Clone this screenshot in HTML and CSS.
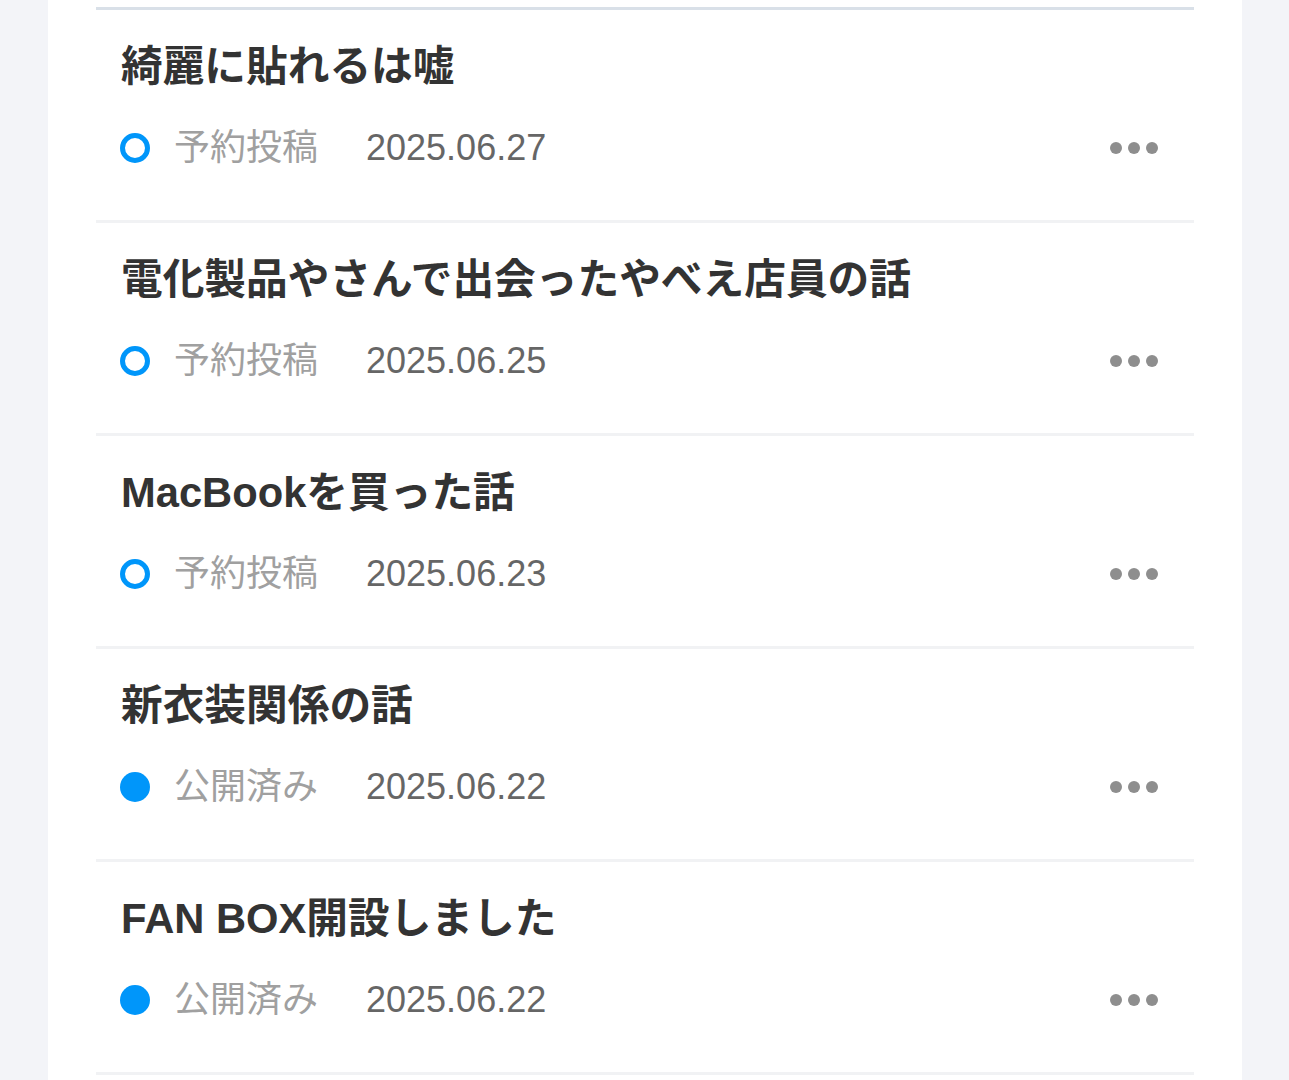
FILE: index.html
```html
<!DOCTYPE html>
<html lang="ja">
<head>
<meta charset="utf-8">
<link rel="stylesheet" href="styles.css">
</head>
<body>
<div class="page">
  <div class="card">
    <ul class="list">
      <li class="row">
        <div class="title">綺麗に貼れるは嘘</div>
        <div class="meta">
          <span class="status-icon ring"></span>
          <span class="status">予約投稿</span>
          <span class="date">2025.06.27</span>
          <span class="more"><i></i><i></i><i></i></span>
        </div>
      </li>
      <li class="row">
        <div class="title">電化製品やさんで出会ったやべえ店員の話</div>
        <div class="meta">
          <span class="status-icon ring"></span>
          <span class="status">予約投稿</span>
          <span class="date">2025.06.25</span>
          <span class="more"><i></i><i></i><i></i></span>
        </div>
      </li>
      <li class="row">
        <div class="title">MacBookを買った話</div>
        <div class="meta">
          <span class="status-icon ring"></span>
          <span class="status">予約投稿</span>
          <span class="date">2025.06.23</span>
          <span class="more"><i></i><i></i><i></i></span>
        </div>
      </li>
      <li class="row">
        <div class="title">新衣装関係の話</div>
        <div class="meta">
          <span class="status-icon dot"></span>
          <span class="status">公開済み</span>
          <span class="date">2025.06.22</span>
          <span class="more"><i></i><i></i><i></i></span>
        </div>
      </li>
      <li class="row">
        <div class="title">FAN BOX開設しました</div>
        <div class="meta">
          <span class="status-icon dot"></span>
          <span class="status">公開済み</span>
          <span class="date">2025.06.22</span>
          <span class="more"><i></i><i></i><i></i></span>
        </div>
      </li>
    </ul>
  </div>
</div>
</body>
</html>
```

FILE: styles.css
```css
html, body {
  margin: 0;
  padding: 0;
  background: #f3f4f8;
}
body {
  font-family: "Liberation Sans", "Noto Sans CJK JP", sans-serif;
  height: 1080px;
  overflow: hidden;
}
.page {
  padding: 0 47px 0 48px;
}
.card {
  background: #ffffff;
  padding: 7px 48px 0 48px;
  min-height: 1080px;
}
.list {
  list-style: none;
  margin: 0;
  padding: 0;
  border-top: 3px solid #d9e0e8;
}
.row {
  padding: 27px 36px 47px 24px;
  border-bottom: 3px solid #f1f2f4;
}
.title {
  font-size: 41.7px;
  line-height: 60px;
  font-weight: 700;
  color: #333333;
  white-space: nowrap;
  margin-left: 1px;
}
.meta {
  margin-top: 26px;
  height: 50px;
  display: flex;
  align-items: center;
}
.status-icon {
  width: 30px;
  height: 30px;
  border-radius: 50%;
  box-sizing: border-box;
  flex: none;
  margin-right: 24px;
}
.ring {
  border: 5px solid #0096fa;
}
.dot {
  background: #0096fa;
}
.status {
  font-size: 36px;
  color: #a0a0a0;
  margin-right: 48px;
  line-height: 50px;
}
.date {
  font-size: 36px;
  color: #666666;
  line-height: 50px;
}
.more {
  margin-left: auto;
  display: flex;
  gap: 6px;
  align-items: center;
}
.more i {
  display: block;
  width: 12px;
  height: 12px;
  border-radius: 50%;
  background: #8e8e8e;
}
```
